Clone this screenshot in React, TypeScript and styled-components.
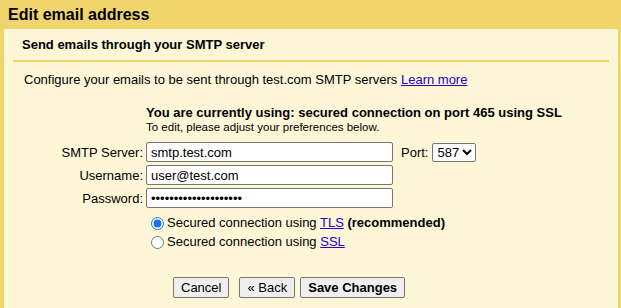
import React from 'react';
import styled, { createGlobalStyle } from 'styled-components';

const GlobalStyle = createGlobalStyle`
  html, body {
    margin: 0;
    padding: 0;
    background: #f0d46c;
  }
  body {
    font-family: "Liberation Sans", Arial, sans-serif;
    font-size: 13px;
    color: #000;
  }
`;

const Dialog = styled.div`
  width: 621px;
  height: 308px;
  background: #f0d46c;
  display: flex;
  flex-direction: column;
  overflow: hidden;
`;

const TitleBar = styled.div`
  height: 29px;
  display: flex;
  align-items: center;
  padding-left: 8px;
  font-size: 16px;
  font-weight: bold;
`;

const Panel = styled.div`
  flex: 1;
  margin: 0 3px 0 4px;
  background: #fdf7d8;
  padding: 0 9px;
  display: flex;
  flex-direction: column;
`;

const SectionHead = styled.div`
  height: 31px;
  display: flex;
  align-items: center;
  padding-left: 9px;
  font-weight: bold;
  border-bottom: 2px solid #f0d46c;
`;

const Intro = styled.p`
  margin: 10px 0 0 11px;
  line-height: 16px;
`;

const Link = styled.a`
  color: #2200cc;
  text-decoration: underline;
  cursor: pointer;
`;

const Status = styled.div`
  margin: 18px 0 0 133px;
  line-height: 14px;
`;

const StatusMain = styled.div`
  font-weight: bold;
`;

const StatusSub = styled.div`
  font-size: 11.5px;
`;

const FormGrid = styled.div`
  display: grid;
  grid-template-columns: 130px 247px auto;
  column-gap: 3px;
  row-gap: 3px;
  margin-top: 8px;
  align-items: center;
`;

const Label = styled.label`
  text-align: right;
`;

const TextInput = styled.input`
  box-sizing: border-box;
  width: 247px;
  height: 20px;
  border: 1px solid #767676;
  border-radius: 2px;
  background: #fff;
  padding: 0 4px;
  font: 13px "Liberation Sans", Arial, sans-serif;
  color: #000;
`;

const PortCell = styled.div`
  display: flex;
  align-items: center;
  gap: 4px;
  padding-left: 5px;
`;

const Select = styled.select`
  height: 19px;
  font: 13px "Liberation Sans", Arial, sans-serif;
  border: 1px solid #767676;
  border-radius: 2px;
  background: #fff;
  padding: 0;
`;

const RadioGroup = styled.div`
  display: flex;
  flex-direction: column;
  gap: 3px;
  margin: 7px 0 0 133px;
`;

const RadioRow = styled.label`
  display: flex;
  align-items: center;
  gap: 3px;
  line-height: 16px;
`;

const Radio = styled.input`
  margin: 0 0 0 5px;
  width: 13px;
  height: 13px;
  accent-color: #1a73e8;
`;

const Buttons = styled.div`
  display: flex;
  margin: 27px 0 0 160px;
`;

const Button = styled.button<{ $primary?: boolean; $gap?: number }>`
  height: 21px;
  padding: 0 7px;
  margin-right: ${p => p.$gap ?? 0}px;
  font: ${p => (p.$primary ? 'bold' : 'normal')} 13px "Liberation Sans", Arial, sans-serif;
  background: #efefef;
  border: 1px solid #767676;
  border-radius: 2px;
  color: #000;
`;

const App = () => {
  return (
    <Dialog>
      <GlobalStyle />
      <TitleBar>Edit email address</TitleBar>
      <Panel>
        <SectionHead>Send emails through your SMTP server</SectionHead>
        <Intro>
          Configure your emails to be sent through test.com SMTP servers <Link>Learn more</Link>
        </Intro>
        <Status>
          <StatusMain>You are currently using: secured connection on port 465 using SSL</StatusMain>
          <StatusSub>To edit, please adjust your preferences below.</StatusSub>
        </Status>
        <FormGrid>
          <Label>SMTP Server:</Label>
          <TextInput defaultValue="smtp.test.com" />
          <PortCell>
            Port:
            <Select defaultValue="587">
              <option>587</option>
              <option>465</option>
            </Select>
          </PortCell>
          <Label>Username:</Label>
          <TextInput defaultValue="user@test.com" />
          <span />
          <Label>Password:</Label>
          <TextInput type="password" defaultValue="passwordpassword1234" />
          <span />
        </FormGrid>
        <RadioGroup>
          <RadioRow>
            <Radio type="radio" name="sec" defaultChecked />
            <span>
              Secured connection using <Link>TLS</Link> <b>(recommended)</b>
            </span>
          </RadioRow>
          <RadioRow>
            <Radio type="radio" name="sec" />
            <span>
              Secured connection using <Link>SSL</Link>
            </span>
          </RadioRow>
        </RadioGroup>
        <Buttons>
          <Button $gap={10}>Cancel</Button>
          <Button $gap={5}>« Back</Button>
          <Button $primary>Save Changes</Button>
        </Buttons>
      </Panel>
    </Dialog>
  );
};

export default App;
